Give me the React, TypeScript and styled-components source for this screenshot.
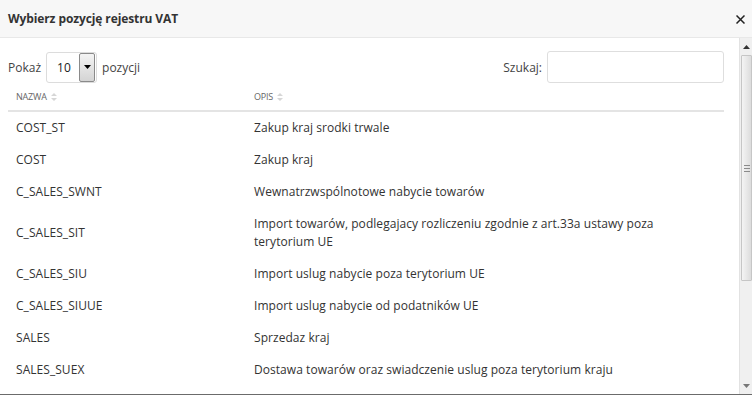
import React from "react";
import styled, { createGlobalStyle } from "styled-components";

const Global = createGlobalStyle`
  html, body { margin: 0; padding: 0; background: #fff; overflow: hidden; }
  body { font-family: "Open Sans", "Liberation Sans", sans-serif; color: #333; }
  * { box-sizing: border-box; }
`;

const Dialog = styled.div`
  width: 752px;
  height: 396px;
  display: flex;
  flex-direction: column;
  background: #fff;
  overflow: hidden;
`;

const Header = styled.div`
  height: 38px;
  flex: none;
  display: flex;
  align-items: center;
  justify-content: space-between;
  padding: 0 6px 0 8px;
  background: #f7f7f7;
  border-bottom: 1px solid #e8e8e8;
`;

const Title = styled.h4`
  margin: 0;
  font-size: 12px;
  font-weight: 700;
  color: #333;
  letter-spacing: -0.1px;
`;

const Close = styled.button`
  border: 0;
  background: none;
  padding: 0;
  width: 12px;
  height: 12px;
  display: flex;
  align-items: center;
  justify-content: center;
  margin-top: 2px;
  cursor: pointer;
`;

const Body = styled.div`
  flex: none;
  height: 357px;
  display: flex;
  border-bottom: 1px solid #6b6b6b;
`;

const Content = styled.div`
  flex: 1;
  padding: 13px 15px 0 8px;
  overflow: hidden;
`;

const Controls = styled.div`
  display: flex;
  justify-content: space-between;
  align-items: center;
  height: 32px;
  font-size: 12px;
  color: #444;
`;

const Group = styled.label`
  display: flex;
  align-items: center;
  gap: 5px;
`;

const Select = styled.div`
  width: 51px;
  height: 31px;
  border: 1px solid #dcdcdc;
  border-radius: 3px;
  display: flex;
  align-items: center;
  padding: 0 1px 0 10px;
  background: #fff;
  font-size: 12px;
  color: #222;
  justify-content: space-between;
`;

const Arrow = styled.span`
  width: 16px;
  height: 29px;
  border: 1px solid #8a8a8a;
  border-radius: 2px;
  background: linear-gradient(#f4f4f4, #d4d4d4);
  display: flex;
  align-items: center;
  justify-content: center;
`;

const SearchInput = styled.input`
  width: 177px;
  height: 32px;
  border: 1px solid #dedede;
  border-radius: 3px;
  margin: 0;
  outline: none;
`;

const Table = styled.div`
  margin-top: 0;
`;

const HeadRow = styled.div`
  display: grid;
  grid-template-columns: 238px 1fr;
  height: 29px;
  align-items: center;
  border-bottom: 2px solid #e4e4e4;
`;

const HeadCell = styled.div`
  padding-left: 8px;
  font-size: 9px;
  color: #666;
  text-transform: uppercase;
  letter-spacing: -0.2px;
  display: flex;
  align-items: center;
  gap: 4px;
`;

const Row = styled.div`
  display: grid;
  grid-template-columns: 238px 1fr;
  align-items: center;
  font-size: 12px;
  line-height: 18px;
  color: #333;
  letter-spacing: 0.05px;
`;

const Cell = styled.div`
  padding: 7px 60px 7px 8px;
`;

const ScrollBar = styled.div`
  width: 13px;
  flex: none;
  display: flex;
  flex-direction: column;
  background: #f0f0f0;
  border-left: 1px solid #e2e2e2;
`;

const ScrollBtn = styled.div`
  height: 17px;
  display: flex;
  align-items: center;
  justify-content: center;
`;

const Thumb = styled.div`
  height: 226px;
  margin: 0 0 0 1px;
  border: 1px solid #c6c6c6;
  border-radius: 1px;
  background: linear-gradient(90deg, #f4f4f4, #dcdcdc);
  display: flex;
  align-items: center;
  justify-content: center;
`;

const Track = styled.div`
  flex: 1;
`;

const Grip = styled.span`
  width: 6px;
  height: 7px;
  background: repeating-linear-gradient(#8a8a8a 0 1px, transparent 1px 3px);
`;

const rows: [string, string][] = [
  ["COST_ST", "Zakup kraj srodki trwale"],
  ["COST", "Zakup kraj"],
  ["C_SALES_SWNT", "Wewnatrzwspólnotowe nabycie towarów"],
  ["C_SALES_SIT", "Import towarów, podlegajacy rozliczeniu zgodnie z art.33a ustawy poza terytorium UE"],
  ["C_SALES_SIU", "Import uslug nabycie poza terytorium UE"],
  ["C_SALES_SIUUE", "Import uslug nabycie od podatników UE"],
  ["SALES", "Sprzedaz kraj"],
  ["SALES_SUEX", "Dostawa towarów oraz swiadczenie uslug poza terytorium kraju"],
];

const SortIcon = () => (
  <svg width="6" height="8" viewBox="0 0 6 8">
    <path d="M3 0 L6 3 H0 Z M3 8 L6 5 H0 Z" fill="#d6d6d6" />
  </svg>
);

export default function App() {
  return (
    <>
      <Global />
      <Dialog>
        <Header>
          <Title>Wybierz pozycję rejestru VAT</Title>
          <Close aria-label="close">
            <svg width="9" height="9" viewBox="0 0 9 9">
              <path d="M0.5 0.5 L8.5 8.5 M8.5 0.5 L0.5 8.5" stroke="#222" strokeWidth="1.5" />
            </svg>
          </Close>
        </Header>
        <Body>
          <Content>
            <Controls>
              <Group>
                Pokaż
                <Select>
                  10
                  <Arrow>
                    <svg width="7" height="4" viewBox="0 0 7 4">
                      <path d="M0 0 H7 L3.5 4 Z" fill="#000" />
                    </svg>
                  </Arrow>
                </Select>
                pozycji
              </Group>
              <Group>
                Szukaj:
                <SearchInput type="text" />
              </Group>
            </Controls>
            <Table>
              <HeadRow>
                <HeadCell>
                  Nazwa <SortIcon />
                </HeadCell>
                <HeadCell>
                  Opis <SortIcon />
                </HeadCell>
              </HeadRow>
              {rows.map(([code, desc]) => (
                <Row key={code}>
                  <Cell>{code}</Cell>
                  <Cell>{desc}</Cell>
                </Row>
              ))}
            </Table>
          </Content>
          <ScrollBar>
            <ScrollBtn>
              <svg width="7" height="4" viewBox="0 0 7 4">
                <path d="M0 4 H7 L3.5 0 Z" fill="#333" />
              </svg>
            </ScrollBtn>
            <Thumb>
              <Grip />
            </Thumb>
            <Track />
            <ScrollBtn>
              <svg width="7" height="4" viewBox="0 0 7 4">
                <path d="M0 0 H7 L3.5 4 Z" fill="#777" />
              </svg>
            </ScrollBtn>
          </ScrollBar>
        </Body>
      </Dialog>
    </>
  );
}
